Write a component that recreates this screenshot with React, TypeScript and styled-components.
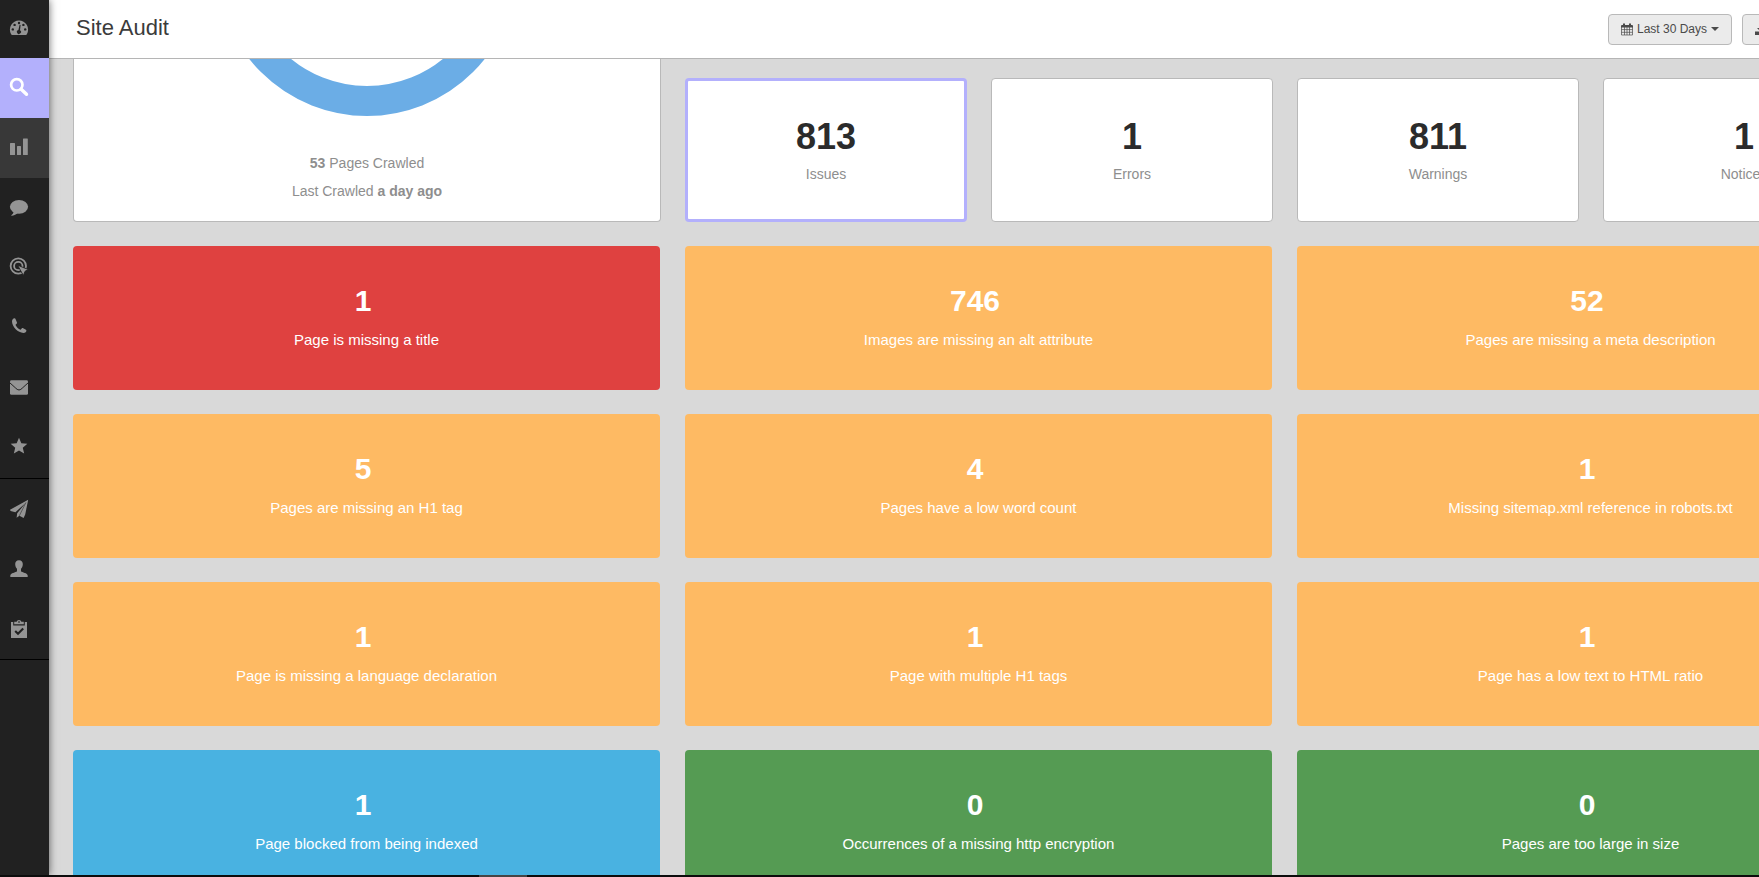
import React from "react";
import styled, { createGlobalStyle, css } from "styled-components";
import { MdStar } from "react-icons/md";

const GlobalStyle = createGlobalStyle`
  *, *::before, *::after { box-sizing: border-box; }
  html, body, #root { height: 100%; margin: 0; }
  body {
    overflow: hidden;
    background: #d9d9d9;
    color: #3b3b3b;
    font-family: "Liberation Sans", Arial, sans-serif;
    font-size: 14px;
  }
`;

const Shell = styled.div`
  height: 100vh;
  display: grid;
  grid-template-columns: 49px minmax(0, 1fr);
  grid-template-rows: minmax(0, 1fr) 2px;
`;

const Sidebar = styled.nav`
  position: relative;
  z-index: 2;
  background: #212121;
  box-shadow: 0 0 8px rgba(0, 0, 0, 0.6);
`;

const NavGroup = styled.ul`
  list-style: none;
  margin: 0;
  padding: 0;
  border-bottom: 1px solid #000;
`;

const NavLink = styled.a<{ $tone?: "active" | "hover"; $height: number; $lift: number }>`
  display: flex;
  align-items: center;
  height: ${(p) => p.$height}px;
  padding: 0 0 ${(p) => p.$lift}px 9px;
  color: #949494;
  ${(p) => p.$tone === "active" && css`background: #b3b0fc; color: #fff;`}
  ${(p) => p.$tone === "hover" && css`background: #383838;`}
`;

const Icon = styled.svg`
  width: 20px;
  height: 20px;
  fill: currentColor;
`;

const Main = styled.main`
  overflow: hidden;
`;

const Header = styled.header`
  display: flex;
  align-items: center;
  justify-content: space-between;
  min-width: 1860px;
  height: 59px;
  padding: 0 24px 0 27px;
  background: #fff;
  border-bottom: 1px solid #b5b5b5;
`;

const Title = styled.h1`
  margin: 0;
  padding-bottom: 2px;
  font-size: 22px;
  line-height: 28px;
  font-weight: 400;
`;

const Toolbar = styled.div`
  display: flex;
  gap: 10px;
`;

const ToolButton = styled.button<{ $wide?: boolean }>`
  display: flex;
  align-items: center;
  gap: 4px;
  height: 31px;
  min-width: ${(p) => (p.$wide ? 143 : 124)}px;
  padding: 0 12px;
  border: 1px solid #b9b9b9;
  border-radius: 4px;
  background: #ebebeb;
  color: #4a4a4a;
  font-family: inherit;
  font-size: 12px;
  line-height: 16px;
`;

const SmallIcon = styled.svg`
  width: 12px;
  height: 13px;
  fill: currentColor;
`;

const Caret = styled.span`
  border: 4px solid transparent;
  border-top-color: currentColor;
  border-bottom: 0;
`;

const Grid = styled.div`
  display: grid;
  grid-template-columns: repeat(6, minmax(282px, 1fr));
  gap: 24px;
  padding: 0 24px 24px;
`;

const CrawlPanel = styled.section`
  grid-column: span 2;
  display: flex;
  flex-direction: column;
  align-items: center;
  padding-bottom: 16px;
  background: #fff;
  border: 1px solid #b9b9b9;
  border-top: 0;
  border-radius: 0 0 4px 4px;
  color: #8e8e8e;
`;

const Gauge = styled.svg`
  width: 300px;
  height: 58px;
  margin-bottom: 32px;
`;

const CrawlLine = styled.p`
  margin: 0;
  line-height: 28px;
`;

const Card = styled.a`
  display: flex;
  flex-direction: column;
  align-items: center;
  justify-content: center;
  height: 144px;
  border-radius: 4px;
  text-decoration: none;
`;

const StatCard = styled(Card)<{ $selected?: boolean }>`
  align-self: end;
  gap: 7px;
  padding-top: 1px;
  background: #fff;
  border: ${(p) => (p.$selected ? "3px solid #b3b0fc" : "1px solid #b9b9b9")};
  color: #8e8e8e;
`;

const StatValue = styled.strong`
  color: #2b2b2b;
  font-size: 36px;
  line-height: 40px;
`;

const StatLabel = styled.span`
  line-height: 20px;
`;

const tones = {
  red: "#df4140",
  orange: "#feba63",
  blue: "#49b2e1",
  green: "#559b53",
};

const IssueCard = styled(Card)<{ $tone: keyof typeof tones }>`
  grid-column: span 2;
  gap: 11px;
  margin-right: 1px;
  padding-bottom: 3px;
  background: ${(p) => tones[p.$tone]};
  color: #fff;
`;

const IssueValue = styled.strong`
  padding-right: 7px;
  font-size: 30px;
  line-height: 36px;
`;

const IssueLabel = styled.span`
  font-size: 15px;
  line-height: 20px;
`;

const BottomBar = styled.div`
  position: relative;
  z-index: 3;
  grid-column: 1 / -1;
  padding-left: 479px;
  background: #0c0c0c;
`;

const BottomThumb = styled.div`
  width: 48px;
  height: 2px;
  background: #454545;
`;

const DashboardIcon = () => (
  <Icon viewBox="0 0 20 20">
    <path d="M3.2 17.9Q2.5 17.9 2.1 17.2A9.1 9.1 0 1 1 17.9 17.2Q17.5 17.9 16.8 17.9Z" />
    <g fill="#212121">
      <circle cx="10" cy="6" r="1.2" />
      <circle cx="5.6" cy="7.9" r="1.2" />
      <circle cx="14.4" cy="7.9" r="1.2" />
      <circle cx="3.8" cy="12.4" r="1.2" />
      <circle cx="16.2" cy="12.4" r="1.2" />
      <path d="M10.6 7.8L11.6 8L11 13.2A2 2 0 1 1 9.4 13Z" />
    </g>
  </Icon>
);

const SearchIcon = () => (
  <Icon viewBox="0 0 20 20">
    <circle cx="7.8" cy="7.8" r="5.7" fill="none" stroke="currentColor" strokeWidth="2.7" />
    <path d="M12.2 12.2L17.5 17.3" stroke="currentColor" strokeWidth="3.4" strokeLinecap="round" />
  </Icon>
);

const BarsIcon = () => (
  <Icon viewBox="0 0 20 20">
    <rect x="1" y="6" width="5" height="12" rx=".5" />
    <rect x="8" y="9" width="4" height="9" rx=".5" />
    <rect x="14" y="1.4" width="4.8" height="16.6" rx=".5" />
  </Icon>
);

const CommentIcon = () => (
  <Icon viewBox="0 0 20 20">
    <ellipse cx="10" cy="9.8" rx="9.1" ry="6.9" />
    <path d="M4.6 14.5C4.5 16.4 3.4 17.4 2.3 18.3C2.2 18.8 2.6 18.8 3 18.8C6 18.2 7.6 17.2 9 16Z" />
  </Icon>
);

const TargetIcon = () => (
  <Icon viewBox="0 1 20 20">
    <g fill="none" stroke="currentColor" strokeWidth="1.8">
      <circle cx="9.3" cy="10" r="7.7" />
      <circle cx="9.3" cy="10" r="4.2" />
    </g>
    <path d="M8.6 9.2L19.4 13.6L16 15.3L14.4 19.6Z" stroke="#212121" strokeWidth=".9" />
  </Icon>
);

const PhoneIcon = () => (
  <Icon viewBox="0 0 20 20">
    <path d="M5.4 2.2C4.2 2.5 3 3.4 3 5.6C3.2 11 9 16.8 14.4 17C16.4 17 17.3 15.9 17.4 14.8C17.5 14.3 17.2 14 16.9 13.8L13.8 12.1C13.4 11.9 13 12 12.7 12.4L11.8 13.5C11.5 13.8 11.2 13.8 10.9 13.6C9 12.6 7.6 11 6.7 9.3C6.5 8.9 6.5 8.6 6.8 8.4L7.8 7.5C8.1 7.2 8.2 6.8 8 6.4L6.4 2.8C6.2 2.3 5.9 2.1 5.4 2.2Z" />
  </Icon>
);

const MailIcon = () => (
  <Icon viewBox="0 0 20 20">
    <rect x="1" y="3.2" width="18" height="14.6" rx="1.4" />
    <path d="M.8 5.8C4 8.6 6.5 11 8.2 12.4Q10 13.6 11.8 12.4C13.5 11 16 8.6 19.2 5.8" fill="none" stroke="#212121" strokeWidth="1" />
  </Icon>
);

const StarIcon = () => <MdStar size={20} />;

const PlaneIcon = () => (
  <Icon viewBox="0 0 20 20">
    <path d="M19.2 .8L1 10.8L1.6 12L6.4 13.2L16.6 4L8.2 14.2L7.6 18.8L10.4 16.8L14.6 18.9L16.2 15.4Z" />
    <path d="M17 3.4L10.3 16.8" stroke="#212121" strokeWidth=".5" />
  </Icon>
);

const UserIcon = () => (
  <Icon viewBox="0 0 20 20">
    <path d="M10 1.2C7.3 1.2 6.1 2.9 6.2 5.2C6.3 7.4 7 8.7 8 9.7V12.2C7 13.5 1.3 13.8 1.3 16.6V18H18.7V16.6C18.7 13.8 13 13.5 12 12.2V9.7C13 8.7 13.7 7.4 13.8 5.2C13.9 2.9 12.7 1.2 10 1.2Z" />
  </Icon>
);

const TasksIcon = () => (
  <Icon viewBox="0 0 20 20">
    <path d="M2 3H4.2V6.4H15.8V3H18V19H2Z" />
    <path fillRule="evenodd" d="M5.2 2.8H7.6Q8 1 10 1T12.4 2.8H14.8V5.2H5.2ZM9 2.4V3.6H11V2.4Z" />
    <path d="M6.2 12L9 14.8L14.2 9.4" fill="none" stroke="#212121" strokeWidth="2.1" />
  </Icon>
);

const CalendarIcon = () => (
  <SmallIcon viewBox="0 0 12 13" aria-hidden="true">
    <path d="M2 .5H4V2H8V.5H10V2H11Q12 2 12 3V4.4H0V3Q0 2 1 2H2Z" />
    <path
      d="M.5 4V12H11.5V4M3.5 4V12M6 4V12M8.5 4V12M.5 6.6H11.5M.5 9.3H11.5"
      fill="none"
      stroke="currentColor"
      strokeWidth=".7"
    />
  </SmallIcon>
);

const DownloadIcon = () => (
  <SmallIcon viewBox="0 0 12 13" aria-hidden="true">
    <path d="M4.5 1H7.5V5H10L6 9L2 5H4.5ZM0 8.4H3.6L6 10.6L8.4 8.4H12V12H0Z" />
  </SmallIcon>
);

type NavItem = { name: string; icon: React.FC; tone?: "active" | "hover"; height?: number; lift?: number };

const navGroups: NavItem[][] = [
  [
    { name: "Dashboard", icon: DashboardIcon, height: 58, lift: 4 },
    { name: "SEO", icon: SearchIcon, tone: "active" },
    { name: "Analytics", icon: BarsIcon, tone: "hover" },
    { name: "Social", icon: CommentIcon },
    { name: "Advertising", icon: TargetIcon },
    { name: "Calls", icon: PhoneIcon, lift: 4 },
    { name: "Email", icon: MailIcon },
    { name: "Reviews", icon: StarIcon, lift: 4 },
  ],
  [
    { name: "Reports", icon: PlaneIcon, lift: 0 },
    { name: "Users", icon: UserIcon, lift: 0 },
    { name: "Tasks", icon: TasksIcon, lift: 0 },
  ],
];

const stats = [
  { value: 813, label: "Issues" },
  { value: 1, label: "Errors" },
  { value: 811, label: "Warnings" },
  { value: 1, label: "Notices" },
];

const issues: { value: number; label: string; tone: keyof typeof tones }[] = [
  { value: 1, label: "Page is missing a title", tone: "red" },
  { value: 746, label: "Images are missing an alt attribute", tone: "orange" },
  { value: 52, label: "Pages are missing a meta description", tone: "orange" },
  { value: 5, label: "Pages are missing an H1 tag", tone: "orange" },
  { value: 4, label: "Pages have a low word count", tone: "orange" },
  { value: 1, label: "Missing sitemap.xml reference in robots.txt", tone: "orange" },
  { value: 1, label: "Page is missing a language declaration", tone: "orange" },
  { value: 1, label: "Page with multiple H1 tags", tone: "orange" },
  { value: 1, label: "Page has a low text to HTML ratio", tone: "orange" },
  { value: 1, label: "Page blocked from being indexed", tone: "blue" },
  { value: 0, label: "Occurrences of a missing http encryption", tone: "green" },
  { value: 0, label: "Pages are too large in size", tone: "green" },
];

export default function App() {
  return (
    <>
      <GlobalStyle />
      <Shell>
        <Sidebar aria-label="Main">
          {navGroups.map((group, g) => (
            <NavGroup key={g}>
              {group.map(({ name, icon: Glyph, tone, height = 60, lift = 2 }) => (
                <li key={name}>
                  <NavLink href="#" aria-label={name} $tone={tone} $height={height} $lift={lift}>
                    <Glyph />
                  </NavLink>
                </li>
              ))}
            </NavGroup>
          ))}
        </Sidebar>
        <Main>
          <Header>
            <Title>Site Audit</Title>
            <Toolbar>
              <ToolButton type="button">
                <CalendarIcon />
                Last 30 Days
                <Caret />
              </ToolButton>
              <ToolButton type="button" aria-label="Download" $wide>
                <DownloadIcon />
              </ToolButton>
            </Toolbar>
          </Header>
          <Grid>
            <CrawlPanel>
              <Gauge viewBox="0 243 300 58" aria-hidden="true">
                <circle cx="150" cy="150" r="135" fill="none" stroke="#6bade6" strokeWidth="30" />
              </Gauge>
              <CrawlLine>
                <b>53</b> Pages Crawled
              </CrawlLine>
              <CrawlLine>
                Last Crawled <b>a day ago</b>
              </CrawlLine>
            </CrawlPanel>
            {stats.map((s, i) => (
              <StatCard key={s.label} href="#" $selected={i === 0}>
                <StatValue>{s.value}</StatValue>
                <StatLabel>{s.label}</StatLabel>
              </StatCard>
            ))}
            {issues.map((s) => (
              <IssueCard key={s.label} href="#" $tone={s.tone}>
                <IssueValue>{s.value}</IssueValue>
                <IssueLabel>{s.label}</IssueLabel>
              </IssueCard>
            ))}
          </Grid>
        </Main>
        <BottomBar>
          <BottomThumb />
        </BottomBar>
      </Shell>
    </>
  );
}
